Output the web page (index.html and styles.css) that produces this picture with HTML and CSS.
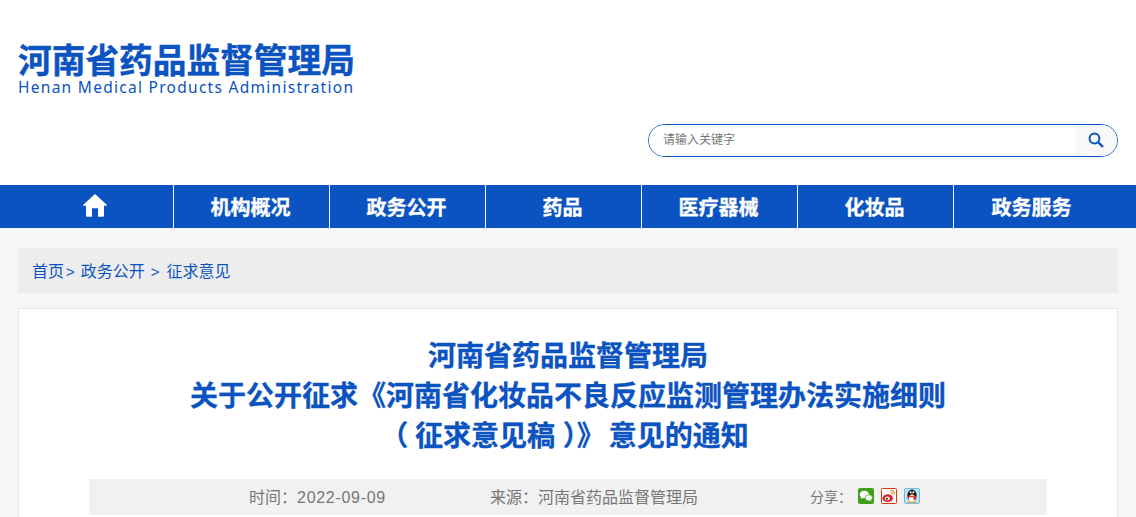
FILE: index.html
```html
<!DOCTYPE html>
<html lang="zh-CN">
<head>
<meta charset="UTF-8">
<title>河南省药品监督管理局</title>
<link rel="stylesheet" href="styles.css">
</head>
<body>

<div class="header">
  <div class="logo">
    <div class="logo-cn">河南省药品监督管理局</div>
    <div class="logo-en">Henan Medical Products Administration</div>
  </div>
  <div class="search">
    <input class="search-input" type="text" placeholder="请输入关键字">
    <button class="search-btn">
      <svg width="16" height="16" viewBox="0 0 16 16"><circle cx="6.5" cy="6.5" r="4.9" fill="none" stroke="#0b53c1" stroke-width="2"/><path d="M10 10l5 5" stroke="#0b53c1" stroke-width="2.4" fill="none"/></svg>
    </button>
  </div>
</div>

<div class="nav">
  <ul class="nav-list">
    <li><a href="#"><svg class="home-icon" width="24" height="24" viewBox="0 0 24 24"><path d="M12 0L.5 10.500q-.8 1 .5 1.300H3v10q0 1 1 1h5v-8.500h6v8.500h5q1 0 1-1v-10h2q1.300-.3.500-1.300z" fill="#fff"/></svg></a></li>
    <li><a href="#">机构概况</a></li>
    <li><a href="#">政务公开</a></li>
    <li><a href="#">药品</a></li>
    <li><a href="#">医疗器械</a></li>
    <li><a href="#">化妆品</a></li>
    <li><a href="#">政务服务</a></li>
  </ul>
</div>

<div class="main">
  <div class="crumb">
    <a href="#">首页</a><span class="sep">&gt;</span><a href="#">政务公开</a><span class="sep sep-wide">&gt;</span><a href="#">征求意见</a>
  </div>

  <div class="article">
    <h1 class="title">河南省药品监督管理局<br>关于公开征求《河南省化妆品不良反应监测管理办法实施细则<br><span class="paren-open">（</span> 征求意见稿 <span class="paren-close">）》</span>意见的通知</h1>
    <div class="meta">
      <span class="meta-time">时间<span class="colon">：</span><span class="date">2022-09-09</span></span>
      <span class="meta-source">来源<span class="colon">：</span>河南省药品监督管理局</span>
      <span class="share">
        <span class="share-label">分享<span class="colon">：</span></span>
        <!-- 微信 -->
        <svg class="share-icon" width="16" height="16" viewBox="0 0 16 16"><rect x="0" y="0" width="16" height="16" rx="2" fill="#3f9e1a"/><ellipse cx="6.300" cy="6.500" rx="4.600" ry="3.800" fill="#fff"/><path d="M3.500 9l-.6 2 2.200-1.200z" fill="#fff"/><ellipse cx="10.800" cy="9.800" rx="3.700" ry="3.100" fill="#fff" stroke="#3f9e1a" stroke-width=".7"/><path d="M12.600 12.200l.7 1.400-2-.9z" fill="#fff"/></svg>
        <!-- 微博 -->
        <svg class="share-icon" width="16" height="16" viewBox="0 0 16 16"><rect x=".5" y=".5" width="15" height="15" rx="1" fill="#fff" stroke="#d9380f"/><ellipse cx="6.700" cy="10.200" rx="5.200" ry="3.900" fill="#d8232a"/><ellipse cx="6.300" cy="10.500" rx="2.400" ry="1.900" fill="#fff"/><circle cx="6" cy="10.700" r="1" fill="#222"/><path d="M9.500 2.800c2.600-.5 4.400 1.300 3.800 3.900M9.700 5c1.200-.2 1.900.5 1.700 1.700" fill="none" stroke="#f08a1d" stroke-width="1.200"/></svg>
        <!-- QQ -->
        <svg class="share-icon" width="16" height="16" viewBox="0 0 16 16"><rect x=".5" y=".5" width="15" height="15" rx="1.500" fill="#bfe4fa" stroke="#6fbbe8"/><ellipse cx="8" cy="7.500" rx="4.600" ry="6" fill="#151515"/><ellipse cx="8" cy="10.200" rx="3.200" ry="3.400" fill="#fff"/><circle cx="6.600" cy="4.200" r="1" fill="#fff"/><circle cx="9.400" cy="4.200" r="1" fill="#fff"/><path d="M6 5.700h4L8 7.200z" fill="#f5a623"/><path d="M3.600 7.700h8.800v1.500H3.600zM9.500 9h2v3h-2z" fill="#e0302a"/><path d="M3.500 13.400h4v1.500h-4zM8.500 13.400h4v1.500h-4z" fill="#f5a623"/></svg>
      </span>
    </div>
  </div>
</div>

</body>
</html>
```

FILE: styles.css
```css
* { box-sizing: border-box; }
body { margin: 0; background: #f5f7f6; font-family: "Liberation Sans", "Noto Sans CJK SC", sans-serif; }
a { text-decoration: none; color: inherit; }

.header { background: #fff; height: 185px; padding: 0 18px; display: flex; flex-direction: column; }
.logo { margin-top: 40px; width: 340px; color: #0b53c1; }
.logo-cn { font-size: 33.7px; font-weight: 700; line-height: 42px; white-space: nowrap; -webkit-text-stroke: .4px #0b53c1; }
.logo-en { font-family: "Noto Sans", sans-serif; font-size: 15.5px; line-height: 11px; letter-spacing: 1.28px; white-space: nowrap; }

.search { align-self: flex-end; margin-top: 31px; width: 470px; height: 33px; border: 1px solid #0b53c1; border-radius: 17px; display: flex; overflow: hidden; }
.search-input { flex: 1; border: 0; outline: 0; padding: 0 14px; font-size: 12px; font-family: inherit; background: #fff; margin-top: -1px; }
.search-input::placeholder { color: #757575; opacity: 1; }
.search-btn { width: 41px; border: 0; padding: 1px 2px 0 0; background: #f8f8f8; }

.nav { background: #0b53c1; height: 43px; padding: 0 18px; }
.nav-list { list-style: none; margin: 0; padding: 0; display: flex; }
.nav-list li { width: 156px; height: 43px; padding-right: 2px; border-right: 1px solid #fff; text-align: center; line-height: 47px; color: #fff; font-size: 20px; font-weight: 700; -webkit-text-stroke: .3px #fff; }
.nav-list li:last-child { border-right: 0; padding-right: 1px; }
.home-icon { vertical-align: middle; margin-top: -8px; }

.main { padding: 20px 18px 0; }
.crumb { height: 45px; background: #ededed; padding-left: 14px; line-height: 47px; font-size: 16px; color: #0b53c1; }
.crumb .sep { margin: 0 6px 0 2px; font-size: 15px; }
.crumb .sep-wide { margin: 0 7px 0 6px; }

.article { margin-top: 15px; background: #fff; border: 1px solid #e6e6e6; padding: 28px 70px 20px; }
.title { margin: 0; text-align: center; color: #0b53c1; font-size: 28px; font-weight: 700; line-height: 40px; -webkit-text-stroke: .3px #0b53c1; }
.paren-open { margin: 0 -1px 0 -7px; }
.paren-close { margin-right: 4px; }
.meta { margin-top: 22px; padding-bottom: 3px; height: 36px; background: #f1f1f1; display: flex; align-items: center; font-size: 16px; color: #777; }
.meta-time { margin-left: 160px; width: 241px; }
.meta-source { width: 320px; }
.colon { font-family: "Noto Sans CJK TC", sans-serif; line-height: 1; }
.date { letter-spacing: .7px; }
.share { display: flex; align-items: center; font-size: 14px; }
.share-label { width: 48px; }
.share-icon { margin: 1px 7px 0 0; }
```
